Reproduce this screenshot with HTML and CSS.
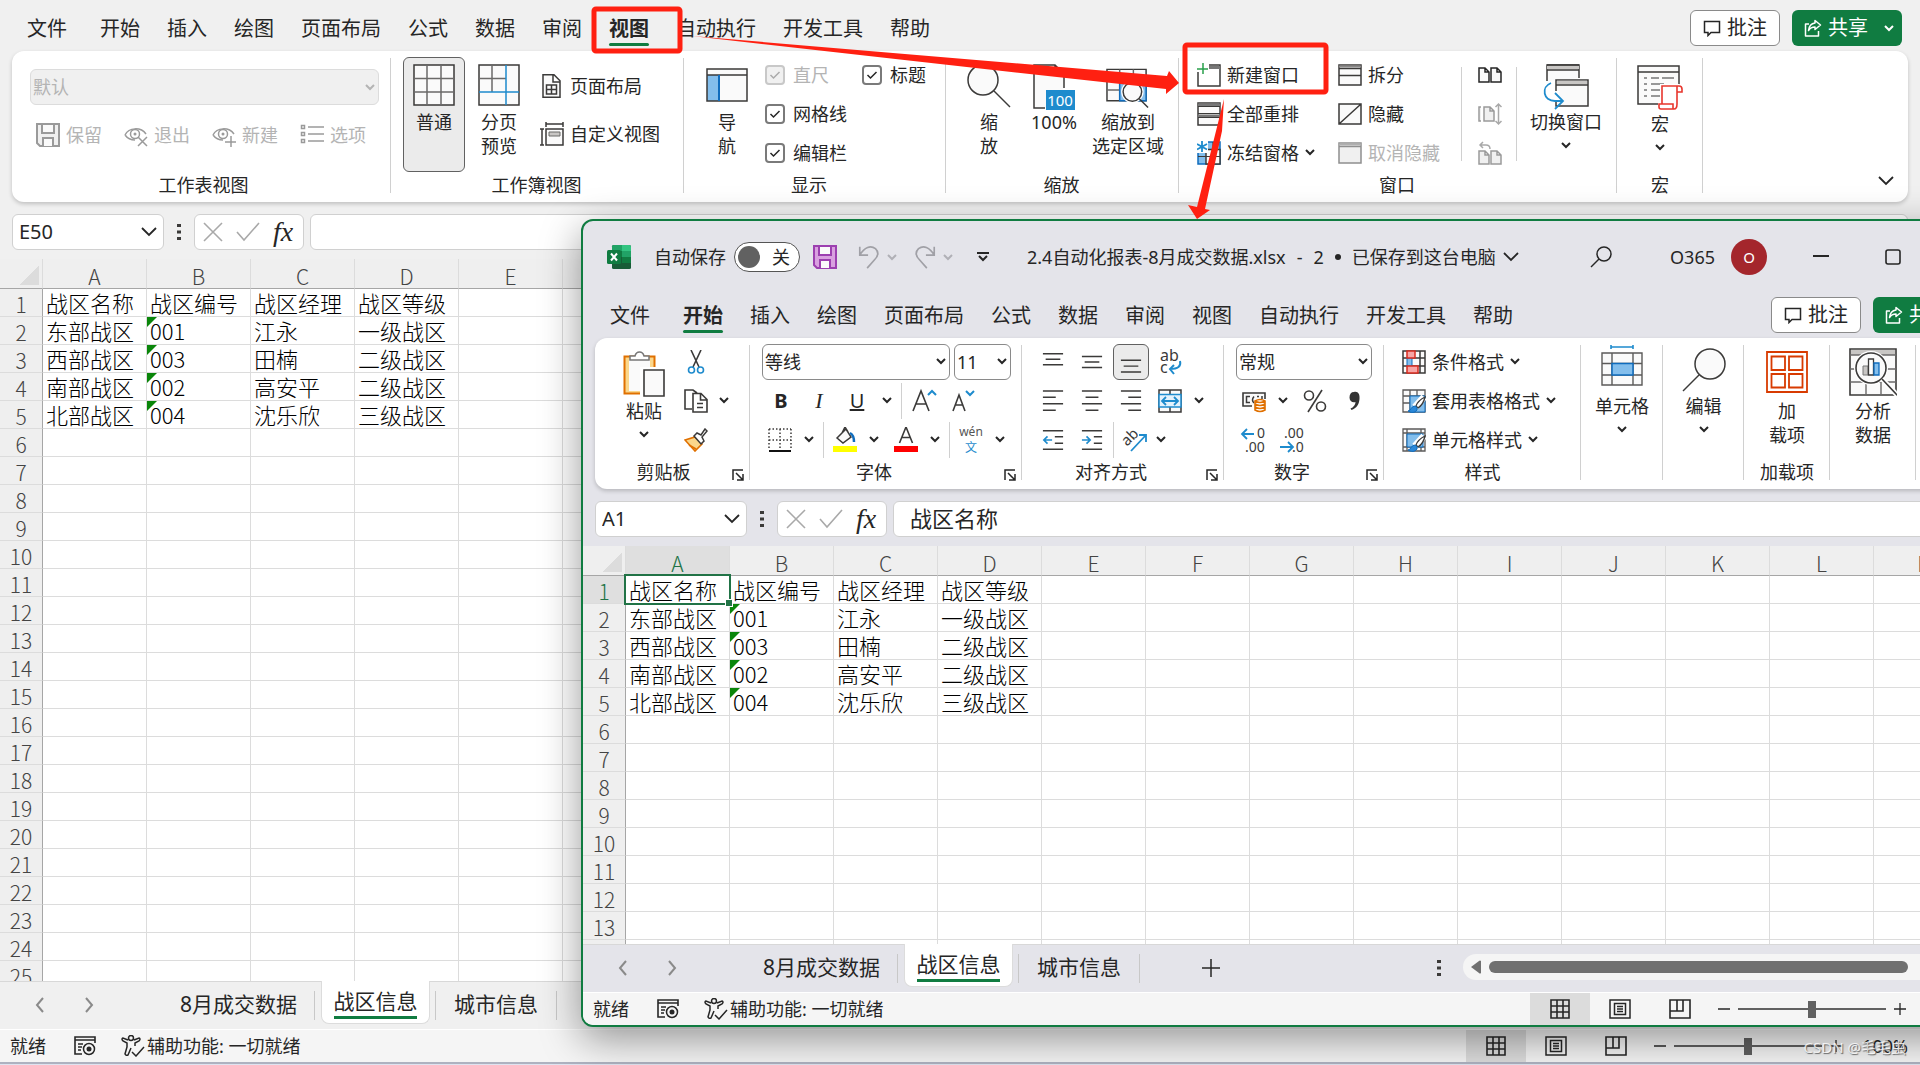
FILE: index.html
```html
<!DOCTYPE html>
<html lang="zh-CN">
<head>
<meta charset="utf-8">
<title>2.4自动化报表-8月成交数据.xlsx</title>
<link rel="stylesheet" href="styles.css">
<script src="sheet.js" defer></script>
</head>
<body>
<svg class="defs" aria-hidden="true">
  <symbol id="chev" viewBox="0 0 10 7"><path d="M1 1l4 4 4-4" fill="none" stroke="currentColor" stroke-width="2"/></symbol>
  <symbol id="chev-lg" viewBox="0 0 16 10"><path d="M1 1l7 7 7-7" fill="none" stroke="currentColor" stroke-width="1.800"/></symbol>
  <symbol id="left" viewBox="0 0 10 16"><path d="M8 1L2 8l6 7" fill="none" stroke="currentColor" stroke-width="2"/></symbol>
  <symbol id="right" viewBox="0 0 10 16"><path d="M2 1l6 7-6 7" fill="none" stroke="currentColor" stroke-width="2"/></symbol>
  <symbol id="comment" viewBox="0 0 18 18"><path d="M1.500 2.500h15v11H8l-3 3v-3H1.500z" fill="none" stroke="#262626" stroke-width="1.500"/></symbol>
  <symbol id="share" viewBox="0 0 18 18"><path d="M5 5H1.500v12h13v-5M11 1.500l5.500 4.500L11 10.500V8C8 8 6 9 4.500 11.500 5 7 7.500 4.500 11 4z" fill="none" stroke="#fff" stroke-width="1.500" stroke-linejoin="round"/></symbol>
  <symbol id="save" viewBox="0 0 24 24"><path d="M1 1h22v22H4l-3-3z" fill="var(--f,#f0f0f0)" stroke="currentColor" stroke-width="2"/><path d="M6 1h12v9H6zM7 23v-8h10v8" fill="#fafafa" stroke="currentColor" stroke-width="2"/></symbol>
  <symbol id="eye" viewBox="0 0 24 24"><path d="M1 12C5 4 17 4 22 11M1 12c3 4 6 5 10 5" fill="none" stroke="currentColor" stroke-width="1.500"/><circle cx="11" cy="11" r="4.500" fill="none" stroke="currentColor" stroke-width="1.500"/><circle cx="11" cy="11" r="1.500" fill="currentColor"/></symbol>
  <symbol id="list" viewBox="0 0 24 24"><path d="M1.500 2.500h3v3h-3zM1.500 9.500h3v3h-3zM1.500 16.500h3v3h-3zM8 4h16M8 11h16M8 18h16" fill="none" stroke="currentColor" stroke-width="1.500"/></symbol>
  <symbol id="grid-lg" viewBox="0 0 42 42"><path d="M1 1h40v40H1z" fill="#fafafa" stroke="#3b3a39" stroke-width="1.500"/><path d="M14 1v40M28 1v40M1 14.500h40M1 28h40" stroke="#6b6a69" stroke-width="1.500"/></symbol>
  <symbol id="pagebreak" viewBox="0 0 42 42"><path d="M1 1h40v40H1z" fill="#fafafa" stroke="#3b3a39" stroke-width="1.500"/><path d="M14 1v27M1 14.500h27" stroke="#6b6a69" stroke-width="1.500"/><path d="M28 1v40M1 28h40" stroke="#1e8bcd" stroke-width="1.500"/></symbol>
  <symbol id="page" viewBox="0 0 24 24"><path d="M3 .8h11l6 6v16.400H3zM13 1v7h7" fill="#fafafa" stroke="#3b3a39" stroke-width="1.500"/><path d="M6.500 11h10v9h-10zM11.500 11v9M6.500 15.500h10" fill="none" stroke="#3b3a39" stroke-width="1.500"/></symbol>
  <symbol id="custom" viewBox="0 0 24 24"><path d="M6 7h17v16H6z" fill="#fafafa" stroke="#3b3a39" stroke-width="1.500"/><path d="M9 10h11v4H9z" fill="#c8c6c4" stroke="#6b6a69"/><path d="M6 2h17M6 0v5M23 0v5M2 7v16M0 7h4M0 23h4" stroke="#3b3a39" stroke-width="1.500"/></symbol>
  <symbol id="navpane" viewBox="0 0 42 42"><path d="M1 5h40v32H1z" fill="#fafafa"/><path d="M1 11h12v26H1z" fill="#83beec"/><path d="M1 5h40v32H1zM1 11h40" fill="none" stroke="#3b3a39" stroke-width="1.500"/><path d="M13 11v26" stroke="#0f6cbd" stroke-width="2"/></symbol>
  <symbol id="zoom" viewBox="0 0 44 44"><circle cx="16" cy="16" r="15" fill="#fafafa" stroke="#3b3a39" stroke-width="1.500"/><path d="M27 27l16 16" stroke="#3b3a39" stroke-width="1.500"/></symbol>
  <symbol id="find" viewBox="0 0 44 44"><circle cx="28" cy="16" r="15" fill="#fafafa" stroke="#3b3a39" stroke-width="1.500"/><path d="M17 27L1 43" stroke="#3b3a39" stroke-width="1.500"/></symbol>
  <symbol id="zoomsel" viewBox="0 0 45 44"><path d="M1 5h40v32H1z" fill="#fafafa" stroke="#3b3a39" stroke-width="1.500"/><path d="M14 5v32M28 5v32M1 15h40M1 26h13" stroke="#6b6a69" stroke-width="1.500"/><path d="M14 15h27v22H14z" fill="#83beec" stroke="#0f6cbd" stroke-width="1.500"/><circle cx="27" cy="28" r="9.500" fill="#fafafa" stroke="#fff" stroke-width="4"/><circle cx="27" cy="28" r="9.500" fill="#fafafa" stroke="#3b3a39" stroke-width="1.500"/><path d="M34 35l9 9" stroke="#3b3a39" stroke-width="1.500"/></symbol>
  <symbol id="newwin" viewBox="0 0 24 24"><path d="M1 9v14h22V2H12" fill="none" stroke="#3b3a39" stroke-width="1.500"/><path d="M12 4.500h11" stroke="#777" stroke-width="3"/><path d="M6 0v11M0 6h11" stroke="#28a04b" stroke-width="1.500"/></symbol>
  <symbol id="arrange" viewBox="0 0 24 24"><path d="M1 1h22v22H1z" fill="#fafafa" stroke="#3b3a39" stroke-width="1.500"/><path d="M1 3h22M1 14h22" stroke="#777" stroke-width="3"/><path d="M1 4.500h22M1 11.500h22M1 15.500h22" stroke="#3b3a39" stroke-width="1.200"/></symbol>
  <symbol id="freeze" viewBox="0 0 24 24"><path d="M1 1h22v22H1z" fill="#83beec" stroke="#0f6cbd" stroke-width="1.500"/><path d="M9 8.500h14V23H9z" fill="#fafafa" stroke="#3b3a39" stroke-width="1.500"/><path d="M16 1v22M1 15.500h22" stroke="#3b3a39" stroke-width="1.200"/><path d="M0 0h11v12H0z" fill="#fff"/><path d="M5 0v11M0 3l10 5.500M10 3L0 8.500" stroke="#1e8bcd" stroke-width="1.800"/></symbol>
  <symbol id="split" viewBox="0 0 24 24"><path d="M1 2h22v20H1zM1 5.500h22M1 12.500h22" fill="#fafafa" stroke="#3b3a39" stroke-width="1.500"/><path d="M1 3.500h22" stroke="#8a8988" stroke-width="2"/></symbol>
  <symbol id="hide" viewBox="0 0 24 24"><path d="M1 2h22v20H1zM1 22L23 2" fill="#fafafa" stroke="#3b3a39" stroke-width="1.500"/></symbol>
  <symbol id="unhide" viewBox="0 0 24 24"><path d="M1 2h22v20H1zM1 5.500h22" fill="#f0f0f0" stroke="#8f8f8f" stroke-width="1.500"/><path d="M1 3.500h22" stroke="#b0b0b0" stroke-width="2"/></symbol>
  <symbol id="twopages" viewBox="0 0 24 24"><path d="M1 5h6l4 4v10H1zM7 5v4h4M13 5h6l4 4v10H13zM19 5v4h4" fill="#fafafa" stroke="currentColor" stroke-width="1.500"/></symbol>
  <symbol id="syncscroll" viewBox="0 0 24 24"><path d="M3 5H1v14h2M6 5h6l4 4v10H6zM12 5v4h4" fill="#f0f0f0" stroke="currentColor" stroke-width="1.500"/><path d="M20.500 2v20M17.500 5l3-3 3 3M17.500 19l3 3 3-3" fill="none" stroke="#a9a9a9" stroke-width="1.500"/></symbol>
  <symbol id="resetpos" viewBox="0 0 24 24"><path d="M1 10h6l4 4v9H1zM7 10v4h4M13 10h6l4 4v9H13zM19 10v4h4" fill="#f0f0f0" stroke="currentColor" stroke-width="1.500"/><path d="M5 1L2 4l3 3M2 4h6q4 0 4 4" fill="none" stroke="#a9a9a9" stroke-width="1.500"/></symbol>
  <symbol id="switchwin" viewBox="0 0 46 46"><path d="M4 17V1h32v13" fill="#fafafa" stroke="#3b3a39" stroke-width="1.500"/><path d="M4 3.500h32" stroke="#c8c6c4" stroke-width="3.500"/><path d="M4 1h32M4 6h32" stroke="#3b3a39" stroke-width="1.500"/><path d="M13 16h32v26H13z" fill="#fafafa" stroke="#3b3a39" stroke-width="1.500"/><path d="M14 18.500h30" stroke="#c8c6c4" stroke-width="3.500"/><path d="M13 21h32" stroke="#3b3a39" stroke-width="1.500"/><path d="M10 27h6v10h-6z" fill="#fff"/><path d="M8 19C-2 23 0 37 12 37h8M12 29l8 8-8 8" fill="none" stroke="#1e8bcd" stroke-width="1.800"/></symbol>
  <symbol id="macro" viewBox="0 0 46 46"><path d="M1 2h41v38H1zM1 8h41" fill="#fafafa" stroke="#3b3a39" stroke-width="1.500"/><path d="M7 14h3M14 14h8M25 14h12M7 20h3M14 20h13M7 26h3M14 26h9M7 32h3M14 32h9" stroke="#777" stroke-width="1.500"/><path d="M25 22h17q3 0 3 6h-4v17H23v-5h2z" fill="#fff" stroke="#fff" stroke-width="4"/><path d="M25 40V22h17q3 0 3 3v3h-5V22M40 28v12q0 5-3 5H24q-2 0-2-2v-3h14v5" fill="#fff" stroke="#e8362d" stroke-width="1.600"/></symbol>
  <symbol id="excel" viewBox="0 0 24 24"><rect x="5" width="19" height="24" rx="1.500" fill="#185c37"/><path d="M5 1.500Q5 0 6.500 0H15v6H5z" fill="#21a366"/><path d="M15 0h7.500Q24 0 24 1.500V6h-9z" fill="#33c481"/><path d="M5 6h10v6H5z" fill="#107c41"/><path d="M15 6h9v6h-9z" fill="#21a366"/><path d="M15 12h9v6h-9z" fill="#107c41"/><rect y="5" width="14" height="14" rx="1.500" fill="#107c41"/><path d="M4 8.500l6 7M10 8.500l-6 7" stroke="#fff" stroke-width="2"/></symbol>
  <symbol id="undo" viewBox="0 0 24 26"><path d="M2 2v9h9M2 11C7 2 14 0 19 4c4 4 3 8-1 12l-8 9" fill="none" stroke="#a0a0a6" stroke-width="1.800"/></symbol>
  <symbol id="qat" viewBox="0 0 12 10"><path d="M0 1h12M2 4l4 4 4-4" fill="none" stroke="#262626" stroke-width="2"/></symbol>
  <symbol id="paste" viewBox="0 0 42 46"><path d="M1.500 5.500h30v37h-30z" fill="#fbd78b" stroke="#e07000" stroke-width="2"/><path d="M6 9h21v31H6z" fill="#fafafa"/><path d="M7 9V5h5q1-4 4.500-4T21 5h5v4z" fill="#fff" stroke="#777" stroke-width="1.500"/><path d="M19 18h22v27H19z" fill="#fff" stroke="#fff" stroke-width="4"/><path d="M21 19h20v26H21z" fill="#fafafa" stroke="#3b3a39" stroke-width="1.600"/></symbol>
  <symbol id="cut" viewBox="0 0 24 24"><path d="M7 0l8 17M17 0L9 17" stroke="#3b3a39" stroke-width="1.600"/><circle cx="7.500" cy="20" r="3" fill="none" stroke="#1e8bcd" stroke-width="1.600"/><circle cx="16.500" cy="20" r="3" fill="none" stroke="#1e8bcd" stroke-width="1.600"/></symbol>
  <symbol id="copy" viewBox="0 0 24 24"><path d="M8 20H1V1h8l4 3M9 4.500h8l6 6V23H9zM16.500 5v6H23M13 14.500h6M13 18.500h6" fill="none" stroke="#3b3a39" stroke-width="1.600"/></symbol>
  <symbol id="painter" viewBox="0 0 24 24"><path d="M1 12l10-3 7 7-7 7z" fill="#fbd78b" stroke="#e07000" stroke-width="1.600"/><path d="M5 17l7 4" stroke="#e07000" stroke-width="1.500"/><path d="M10 8l3-3 4 2 4-6 2 2-5 6 2 4-3 3z" fill="#fff" stroke="#3b3a39" stroke-width="1.500"/></symbol>
  <symbol id="growA" viewBox="0 0 26 24"><path d="M1 22L9 2l8 20M4 15h10" fill="none" stroke="#3b3a39" stroke-width="1.600"/><path d="M16 6l4-4 4 4" fill="none" stroke="#1e8bcd" stroke-width="2"/></symbol>
  <symbol id="shrinkA" viewBox="0 0 26 24"><path d="M1 22L7 6l6 16M3 16h8" fill="none" stroke="#3b3a39" stroke-width="1.600"/><path d="M14 2l4 4 4-4" fill="none" stroke="#1e8bcd" stroke-width="2"/></symbol>
  <symbol id="border" viewBox="0 0 24 24"><path d="M1 1h22M1 12h22M1 1v20M12 1v20M23 1v20" fill="none" stroke="#3b3a39" stroke-width="1.500" stroke-dasharray="1.500 2"/><path d="M1 23h22" stroke="#111" stroke-width="2"/></symbol>
  <symbol id="fill" viewBox="0 0 24 26"><path d="M4 11l9-9 5 8-8 6zM9 6l3-6 3 5" fill="#fafafa" stroke="#3b3a39" stroke-width="1.500"/><path d="M17 6q4 2 4 9" fill="none" stroke="#0f6cbd" stroke-width="2.500"/><path d="M0 19h24v6H0z" fill="#ff0"/></symbol>
  <symbol id="fontcolor" viewBox="0 0 24 26"><path d="M5.500 16L12 0l6.500 16M8 10.500h8" fill="none" stroke="#3b3a39" stroke-width="1.600"/><path d="M0 19h24v6H0z" fill="red"/></symbol>
  <symbol id="al-t" viewBox="0 0 24 24"><path d="M1 3h22M4 9h16M1 15h22" stroke="#3b3a39" stroke-width="1.600"/></symbol>
  <symbol id="al-m" viewBox="0 0 24 24"><path d="M1 6h22M4 12h16M1 18h22" stroke="#3b3a39" stroke-width="1.600"/></symbol>
  <symbol id="al-b" viewBox="0 0 24 24"><path d="M1 10h22M4 16.500h16M1 23h22" stroke="#3b3a39" stroke-width="1.600"/></symbol>
  <symbol id="al-l" viewBox="0 0 24 24"><path d="M1 1h22M1 8h14M1 15h22M1 22h14" stroke="#3b3a39" stroke-width="1.600"/></symbol>
  <symbol id="al-c" viewBox="0 0 24 24"><path d="M1 1h22M5 8h14M1 15h22M5 22h14" stroke="#3b3a39" stroke-width="1.600"/></symbol>
  <symbol id="al-r" viewBox="0 0 24 24"><path d="M1 1h22M9 8h14M1 15h22M9 22h14" stroke="#3b3a39" stroke-width="1.600"/></symbol>
  <symbol id="outdent" viewBox="0 0 24 24"><path d="M1 2h22M14 8.500h9M14 15.500h9M1 22h22" stroke="#3b3a39" stroke-width="1.600"/><path d="M11 12H2M6 8l-4 4 4 4" fill="none" stroke="#1e8bcd" stroke-width="1.800"/></symbol>
  <symbol id="indent" viewBox="0 0 24 24"><path d="M1 2h22M14 8.500h9M14 15.500h9M1 22h22" stroke="#3b3a39" stroke-width="1.600"/><path d="M1 12h9M6 8l4 4-4 4" fill="none" stroke="#1e8bcd" stroke-width="1.800"/></symbol>
  <symbol id="merge" viewBox="0 0 24 24"><path d="M1 1h22v22H1zM12 1v5M12 18v5" fill="#fafafa" stroke="#3b3a39" stroke-width="1.500"/><path d="M1 5.500h22v12.500H1z" fill="#e4f2fc" stroke="#1e8bcd" stroke-width="1.500"/><path d="M4 12h16M8 8l-4 4 4 4M16 8l4 4-4 4" fill="none" stroke="#1e8bcd" stroke-width="1.800"/></symbol>
  <symbol id="currency" viewBox="0 0 24 24"><path d="M10 17H1V4h22v6" fill="#fafafa" stroke="#3b3a39" stroke-width="1.600"/><path d="M8 7.500H4.500v6H8M12 14q-3-3 0-6.500M15 7.500h2M20 7v3" fill="none" stroke="#3b3a39" stroke-width="1.500"/><path d="M13 12v9q5 3 10 0v-9q-5-3-10 0zM13 12q5 3 10 0M13 15q5 3 10 0M13 18q5 3 10 0" fill="#fff" stroke="#e07000" stroke-width="1.600"/></symbol>
  <symbol id="percent" viewBox="0 0 24 24"><circle cx="6" cy="6.500" r="4.500" fill="none" stroke="#3b3a39" stroke-width="1.600"/><circle cx="18" cy="17.500" r="4.500" fill="none" stroke="#3b3a39" stroke-width="1.600"/><path d="M19 1L5 23" stroke="#3b3a39" stroke-width="1.600"/></symbol>
  <symbol id="comma" viewBox="0 0 24 24"><path d="M12 3c4-1 6 2 5.500 7-.5 6-3 9-8 11l-1-1.500c3-1 5-4 5-6.500-3 1-6-1-6-4.500S9 3 12 3z" fill="#333"/></symbol>
  <symbol id="cond" viewBox="0 0 24 24"><path d="M1 1h22v22H1zM1 8h22M1 16h22M18 1v22" fill="#fafafa" stroke="#3b3a39" stroke-width="1.500"/><path d="M5 8h5v8H5z" fill="#83beec" stroke="#0f6cbd"/><path d="M5 1h8v7H5zM5 16h11v7H5z" fill="#f7a5a5" stroke="#d92c20" stroke-width="1.500"/></symbol>
  <symbol id="tablestyle" viewBox="0 0 24 24"><path d="M1 1h22v22H1zM1 7h22M1 14h22M8 1v22M15 1v22" fill="#fafafa" stroke="#5b5a59" stroke-width="1.300"/><path d="M8 7h15v16H8z" fill="#83beec" stroke="#0f6cbd"/><path d="M22 8l-9 10" stroke="#fff" stroke-width="7"/><path d="M23 8c-4 2-8 6-9 9l2 2c3-2 6-6 7-11z" fill="#fff" stroke="#3b3a39" stroke-width="1.300"/><path d="M6 22c3 0 3-5 7-5q3 1 2 4c-2 3-6 3-9 1z" fill="#2b88d8" stroke="#0f6cbd"/></symbol>
  <symbol id="cellstyle" viewBox="0 0 24 24"><path d="M1 1h22v22H1zM1 5h22M5 1v22M1 19h22M19 1v22" fill="#fafafa" stroke="#5b5a59" stroke-width="1.300"/><path d="M5 6h16v13H5z" fill="#83beec" stroke="#0f6cbd"/><path d="M22 8l-9 10" stroke="#fff" stroke-width="7"/><path d="M23 8c-4 2-8 6-9 9l2 2c3-2 6-6 7-11z" fill="#fff" stroke="#3b3a39" stroke-width="1.300"/><path d="M6 22c3 0 3-5 7-5q3 1 2 4c-2 3-6 3-9 1z" fill="#2b88d8" stroke="#0f6cbd"/></symbol>
  <symbol id="cells" viewBox="0 0 42 42"><path d="M10 2h22M10 0v4M32 0v4" stroke="#1e8bcd" stroke-width="1.600"/><path d="M1 8h40v32H1zM1 18.500h40M1 30h40M11 8v32M32 8v32" fill="#fafafa" stroke="#5b5a59" stroke-width="1.400"/><path d="M11 18.500h21V30H11z" fill="#83beec" stroke="#0f6cbd" stroke-width="1.500"/></symbol>
  <symbol id="addins" viewBox="0 0 42 42"><path d="M1 1h40v40H1zM5.500 5.500H19V19H5.500zM23 5.500h13.500V19H23zM5.500 23H19v13.500H5.500zM23 23h13.500v13.500H23z" fill="#fff" stroke="#d83b01" stroke-width="1.800"/></symbol>
  <symbol id="analyze" viewBox="0 0 48 48"><path d="M1 1h46v46H1z" fill="#fafafa" stroke="#3b3a39" stroke-width="1.600"/><path d="M2 2h44v5H2z" fill="#c8c6c4"/><path d="M1 7h46M1 21h46M1 34h46M17 34v13M32 7v40" stroke="#6b6a69" stroke-width="1.400"/><circle cx="22" cy="20" r="15" fill="#fafafa" stroke="#fff" stroke-width="4"/><circle cx="22" cy="20" r="15" fill="#fafafa" stroke="#3b3a39" stroke-width="1.600"/><path d="M14 18h5v9h-5z" fill="#c8c6c4" stroke="#777"/><path d="M19.500 11h5v16h-5z" fill="#fff" stroke="#3b3a39" stroke-width="1.300"/><path d="M25 15h5v12h-5z" fill="#83beec" stroke="#0f6cbd" stroke-width="1.300"/><path d="M33 31l15 16" stroke="#fff" stroke-width="5"/><path d="M33 31l15 16" stroke="#3b3a39" stroke-width="1.600"/></symbol>
  <symbol id="launch" viewBox="0 0 12 12"><path d="M1 11V1h10M4 4l7 7M11 5v6H5" fill="none" stroke="#262626" stroke-width="1.500"/></symbol>
  <symbol id="x" viewBox="0 0 20 20"><path d="M1 1l18 18M19 1L1 19" stroke="#a9a9a9" stroke-width="1.600"/></symbol>
  <symbol id="tick" viewBox="0 0 24 20"><path d="M1 10l7 8L23 1" fill="none" stroke="#a9a9a9" stroke-width="1.600"/></symbol>
  <symbol id="dots" viewBox="0 0 4 16"><path d="M0 0h4v3H0zM0 6.500h4v3H0zM0 13h4v3H0z" fill="#3b3a39"/></symbol>
  <symbol id="record" viewBox="0 0 22 20"><path d="M8 18H1V1h20v6M1 4h20M4 8h5M4 11h4M4 14h3" fill="none" stroke="#262626" stroke-width="1.600"/><circle cx="15" cy="13" r="5.500" fill="none" stroke="#262626" stroke-width="1.500"/><circle cx="15" cy="13" r="2.500" fill="#262626"/></symbol>
  <symbol id="access" viewBox="0 0 24 22"><circle cx="10" cy="3" r="2.500" fill="none" stroke="#262626" stroke-width="1.500"/><path d="M7 5L2 3Q0 4 2 6l4 2v4l-2 7q1 2 3 1l3-7M13 5l5-2q2 1 0 3l-4 2v3M11 17l4 4 8-9" fill="none" stroke="#262626" stroke-width="1.500"/></symbol>
  <symbol id="v-normal" viewBox="0 0 20 20"><path d="M1 1h18v18H1zM7 1v18M13 1v18M1 7h18M1 13h18" fill="none" stroke="#262626" stroke-width="1.600"/></symbol>
  <symbol id="v-layout" viewBox="0 0 22 20"><path d="M1 1h20v18H1zM5.500 4.500h11v11h-11zM8 7.500h6M8 10h6M8 12.500h6" fill="none" stroke="#262626" stroke-width="1.500"/></symbol>
  <symbol id="v-break" viewBox="0 0 22 20"><path d="M1 1h20v18H1zM1 12h13V1M8 1v11" fill="none" stroke="#262626" stroke-width="1.600"/></symbol>
  <symbol id="minus" viewBox="0 0 12 12"><path d="M0 6h12" stroke="#262626" stroke-width="1.500"/></symbol>
  <symbol id="plus" viewBox="0 0 12 12"><path d="M0 6h12M6 0v12" stroke="#262626" stroke-width="1.300"/></symbol>
</svg>

<main class="desktop">
  <section class="window back">
    <header class="tabs">
      <nav>
        <button>文件</button><button>开始</button><button>插入</button><button>绘图</button><button>页面布局</button><button>公式</button><button>数据</button><button>审阅</button><button class="on">视图</button><button>自动执行</button><button>开发工具</button><button>帮助</button>
      </nav>
      <button class="comments"><svg class="s18"><use href="#comment"/></svg>批注</button>
      <button class="share"><svg class="s18"><use href="#share"/></svg>共享<svg class="chev"><use href="#chev"/></svg></button>
    </header>

    <div class="ribbon">
      <div class="group g-sheetview">
        <div class="body rows">
          <select class="combo view" disabled aria-label="工作表视图"><option>默认</option></select>
          <div class="row views">
            <button class="tool" disabled><svg class="s24"><use href="#save"/></svg>保留</button>
            <button class="tool" disabled><svg class="s24"><use href="#eye"/><path d="M14 14l9 9M23 14l-9 9" stroke="currentColor" stroke-width="1.500"/></svg>退出</button>
            <button class="tool" disabled><svg class="s24"><use href="#eye"/><path d="M19 13v11M13 19h11" stroke="currentColor" stroke-width="1.500"/></svg>新建</button>
            <button class="tool" disabled><svg class="s24"><use href="#list"/></svg>选项</button>
          </div>
        </div>
        <div class="caption"><span>工作表视图</span></div>
      </div>
      <div class="group g-bookview">
        <div class="body">
          <button class="tall pressed"><svg class="s42"><use href="#grid-lg"/></svg><span>普通</span></button>
          <button class="tall"><svg class="s42"><use href="#pagebreak"/></svg><span>分页<br>预览</span></button>
          <div class="stack two">
            <button class="tool"><svg class="s24"><use href="#page"/></svg>页面布局</button>
            <button class="tool"><svg class="s24"><use href="#custom"/></svg>自定义视图</button>
          </div>
        </div>
        <div class="caption"><span>工作簿视图</span></div>
      </div>
      <div class="group g-show">
        <div class="body">
          <button class="tall"><svg class="s42"><use href="#navpane"/></svg><span>导<br>航</span></button>
          <div class="checks">
            <label class="off"><input type="checkbox" checked disabled>直尺</label>
            <label><input type="checkbox" checked>标题</label>
            <label><input type="checkbox" checked>网格线</label>
            <label class="own-row"><input type="checkbox" checked>编辑栏</label>
          </div>
        </div>
        <div class="caption"><span>显示</span></div>
      </div>
      <div class="group g-zoom">
        <div class="body">
          <button class="tall"><svg class="s44"><use href="#zoom"/></svg><span>缩<br>放</span></button>
          <button class="tall"><svg class="s42x46" viewBox="0 0 42 46"><path d="M12 44H1V1h21l9 9v14M22 1v9h9" fill="#fafafa" stroke="#3b3a39" stroke-width="1.500"/><path d="M13 26h29v20H13z" fill="#1e8bcd"/><text x="27" y="42" font-size="15" text-anchor="middle" fill="#fff">100</text></svg><span>100%</span></button>
          <button class="tall wide"><svg class="s44"><use href="#zoomsel"/></svg><span>缩放到<br>选定区域</span></button>
        </div>
        <div class="caption"><span>缩放</span></div>
      </div>
      <div class="group g-window">
        <div class="body">
          <div class="stack first">
            <button class="tool"><svg class="s24"><use href="#newwin"/></svg>新建窗口</button>
            <button class="tool"><svg class="s24"><use href="#arrange"/></svg>全部重排</button>
            <button class="tool"><svg class="s24"><use href="#freeze"/></svg>冻结窗格<svg class="chev"><use href="#chev"/></svg></button>
          </div>
          <div class="stack second">
            <button class="tool"><svg class="s24"><use href="#split"/></svg>拆分</button>
            <button class="tool"><svg class="s24"><use href="#hide"/></svg>隐藏</button>
            <button class="tool" disabled><svg class="s24"><use href="#unhide"/></svg>取消隐藏</button>
          </div>
          <div class="stack icons">
            <button class="tool" aria-label="并排查看"><svg class="s24"><use href="#twopages"/></svg></button>
            <button class="tool" disabled aria-label="同步滚动"><svg class="s24"><use href="#syncscroll"/></svg></button>
            <button class="tool" disabled aria-label="重设窗口位置"><svg class="s24"><use href="#resetpos"/></svg></button>
          </div>
          <button class="tall wide"><svg class="s46"><use href="#switchwin"/></svg><span>切换窗口</span><svg class="chev"><use href="#chev"/></svg></button>
        </div>
        <div class="caption"><span>窗口</span></div>
      </div>
      <div class="group g-macro">
        <div class="body">
          <button class="tall"><svg class="s46"><use href="#macro"/></svg><span>宏</span><svg class="chev"><use href="#chev"/></svg></button>
        </div>
        <div class="caption"><span>宏</span></div>
      </div>
      <button class="collapse" aria-label="折叠功能区"><svg class="chev-lg"><use href="#chev-lg"/></svg></button>
    </div>

    <div class="formula">
      <div class="namebox"><input value="E50" aria-label="名称框"><svg class="chev-md"><use href="#chev-lg"/></svg></div>
      <svg class="dots"><use href="#dots"/></svg>
      <div class="fx"><svg class="s20"><use href="#x"/></svg><svg class="tick"><use href="#tick"/></svg><i>fx</i></div>
      <input class="content" value="" aria-label="编辑栏">
    </div>

    <div class="sheet"><table data-cols="18"></table></div>

    <footer>
      <div class="sheettabs">
        <div class="arrows"><button aria-label="上一张"><svg><use href="#left"/></svg></button><button aria-label="下一张"><svg><use href="#right"/></svg></button></div>
        <button class="stab">8月成交数据</button>
        <button class="stab on">战区信息</button>
        <button class="stab last">城市信息</button>
      </div>
      <div class="status">
        <span>就绪</span><svg class="rec"><use href="#record"/></svg><svg class="acc"><use href="#access"/></svg><span>辅助功能: 一切就绪</span>
        <div class="views-switch">
          <button class="on" aria-label="普通视图"><svg class="s20"><use href="#v-normal"/></svg></button>
          <button aria-label="页面布局视图"><svg class="s22"><use href="#v-layout"/></svg></button>
          <button aria-label="分页预览视图"><svg class="s22"><use href="#v-break"/></svg></button>
        </div>
        <svg class="s12"><use href="#minus"/></svg><input type="range" min="0" max="100" value="50" aria-label="显示比例"><svg class="s12"><use href="#plus"/></svg>
        <span class="pct">100%</span>
      </div>
      <div class="edge"></div>
    </footer>
  </section>

  <section class="window front">
    <div class="titlebar">
      <svg class="s24"><use href="#excel"/></svg>
      <span class="autosave">自动保存</span>
      <button class="toggle" role="switch" aria-checked="false"><i></i>关</button>
      <svg class="s24 purple"><use href="#save"/></svg>
      <button class="hist" aria-label="撤消"><svg class="s24"><use href="#undo"/></svg><svg class="chev pale"><use href="#chev"/></svg></button>
      <button class="hist redo" aria-label="恢复"><svg class="s24"><use href="#undo"/></svg><svg class="chev pale"><use href="#chev"/></svg></button>
      <svg class="qat"><use href="#qat"/></svg>
      <div class="doc"><span>2.4自动化报表-8月成交数据.xlsx</span><span>-</span><span>2</span><i></i><span>已保存到这台电脑</span></div>
      <svg class="chev-md"><use href="#chev-lg"/></svg>
      <div class="account">
        <button class="search" aria-label="搜索"><svg class="s22"><circle cx="14" cy="8" r="7" fill="none" stroke="#262626" stroke-width="1.500"/><path d="M9 13L1 21" stroke="#262626" stroke-width="1.500"/></svg></button>
        <span>O365</span><b>O</b>
        <button class="min" aria-label="最小化"><svg class="s16"><path d="M0 7h16" stroke="#262626" stroke-width="2"/></svg></button>
        <button aria-label="最大化"><svg class="s16"><rect x="1" y="1" width="14" height="14" rx="2" fill="none" stroke="#262626" stroke-width="1.600"/></svg></button>
      </div>
    </div>
    <header class="tabs">
      <nav>
        <button>文件</button><button class="on">开始</button><button>插入</button><button>绘图</button><button>页面布局</button><button>公式</button><button>数据</button><button>审阅</button><button>视图</button><button>自动执行</button><button>开发工具</button><button>帮助</button>
      </nav>
      <button class="comments"><svg class="s18"><use href="#comment"/></svg>批注</button>
      <button class="share"><svg class="s18"><use href="#share"/></svg>共享<svg class="chev"><use href="#chev"/></svg></button>
    </header>

    <div class="ribbon">
      <div class="group g-clip">
        <div class="body">
          <button class="tall"><svg class="s42x46"><use href="#paste"/></svg><span>粘贴</span><svg class="chev"><use href="#chev"/></svg></button>
          <div class="stack">
            <button class="tool" aria-label="剪切"><svg class="s24"><use href="#cut"/></svg></button>
            <button class="tool" aria-label="复制"><svg class="s24"><use href="#copy"/></svg><svg class="chev far"><use href="#chev"/></svg></button>
            <button class="tool" aria-label="格式刷"><svg class="s24"><use href="#painter"/></svg></button>
          </div>
        </div>
        <div class="caption"><span>剪贴板</span><svg class="s12"><use href="#launch"/></svg></div>
      </div>
      <div class="group g-font">
        <div class="body rows">
          <div class="row gap4"><select class="combo face" aria-label="字体"><option>等线</option></select><select class="combo size" aria-label="字号"><option>11</option></select></div>
          <div class="row">
            <button class="ib w38"><b>B</b></button><button class="ib w38"><em>I</em></button><button class="ib w38"><u>U</u></button><button class="dd" aria-label="下划线"><svg class="chev"><use href="#chev"/></svg></button><i class="sep"></i>
            <button class="ib w40" aria-label="增大字号"><svg class="s26"><use href="#growA"/></svg></button><button class="ib w40" aria-label="减小字号"><svg class="s26"><use href="#shrinkA"/></svg></button>
          </div>
          <div class="row">
            <button class="ib" aria-label="边框"><svg class="s24"><use href="#border"/></svg></button><button class="dd" aria-label="边框选项"><svg class="chev"><use href="#chev"/></svg></button><i class="sep"></i>
            <button class="ib" aria-label="填充颜色"><svg class="s26"><use href="#fill"/></svg></button><button class="dd" aria-label="填充选项"><svg class="chev"><use href="#chev"/></svg></button>
            <button class="ib" aria-label="字体颜色"><svg class="s26"><use href="#fontcolor"/></svg></button><button class="dd" aria-label="颜色选项"><svg class="chev"><use href="#chev"/></svg></button><i class="sep"></i>
            <button class="ib" aria-label="拼音"><svg class="s26" viewBox="0 0 26 26"><text x="13" y="9" font-size="12" text-anchor="middle" fill="#555">wén</text><text x="13" y="25" font-size="12" text-anchor="middle" fill="#1e8bcd">文</text></svg></button><button class="dd" aria-label="拼音选项"><svg class="chev"><use href="#chev"/></svg></button>
          </div>
        </div>
        <div class="caption"><span>字体</span><svg class="s12"><use href="#launch"/></svg></div>
      </div>
      <div class="group g-align">
        <div class="body rows">
          <div class="row gap3"><button class="ib" aria-label="顶端对齐"><svg class="s22"><use href="#al-t"/></svg></button><button class="ib" aria-label="垂直居中"><svg class="s22"><use href="#al-m"/></svg></button><button class="ib pressed" aria-label="底端对齐"><svg class="s22"><use href="#al-b"/></svg></button><button class="ib" aria-label="自动换行"><svg class="s26" viewBox="0 0 26 26"><text x="3" y="12" font-size="16" fill="#3b3a39">ab</text><text x="3" y="24" font-size="16" fill="#3b3a39">c</text><path d="M23 12q2 8-10 8M17 16l-4 4 4 5" fill="none" stroke="#1e8bcd" stroke-width="2"/></svg></button></div>
          <div class="row gap3"><button class="ib" aria-label="左对齐"><svg class="s22"><use href="#al-l"/></svg></button><button class="ib" aria-label="居中"><svg class="s22"><use href="#al-c"/></svg></button><button class="ib" aria-label="右对齐"><svg class="s22"><use href="#al-r"/></svg></button><button class="ib" aria-label="合并后居中"><svg class="s24"><use href="#merge"/></svg></button><button class="dd slim" aria-label="合并选项"><svg class="chev"><use href="#chev"/></svg></button></div>
          <div class="row"><button class="ib" aria-label="减少缩进"><svg class="s22"><use href="#outdent"/></svg></button><button class="ib after" aria-label="增加缩进"><svg class="s22"><use href="#indent"/></svg></button><i class="sep"></i><button class="ib" aria-label="方向"><svg class="s26" viewBox="0 0 26 26"><text x="3" y="19" font-size="15" fill="#3b3a39" transform="rotate(-45 5 17)">ab</text><path d="M9 24L24 8M17 8h7v7" fill="none" stroke="#1e8bcd" stroke-width="1.800"/></svg></button><button class="dd slim" aria-label="方向选项"><svg class="chev"><use href="#chev"/></svg></button></div>
        </div>
        <div class="caption"><span>对齐方式</span><svg class="s12"><use href="#launch"/></svg></div>
      </div>
      <div class="group g-number">
        <div class="body rows">
          <div class="row"><select class="combo fmt" aria-label="数字格式"><option>常规</option></select></div>
          <div class="row"><button class="ib" aria-label="会计格式"><svg class="s24"><use href="#currency"/></svg></button><button class="dd" aria-label="会计选项"><svg class="chev"><use href="#chev"/></svg></button><button class="ib after" aria-label="百分比"><svg class="s24"><use href="#percent"/></svg></button><button class="ib after" aria-label="千位分隔"><svg class="s24"><use href="#comma"/></svg></button></div>
          <div class="row gap3"><button class="ib" aria-label="增加小数位"><svg class="s26" viewBox="0 0 26 26"><text x="16" y="11" font-size="14" fill="#3b3a39">0</text><text x="4" y="25" font-size="14" fill="#3b3a39">.00</text><path d="M13 7H1M6 2L1 7l5 5" fill="none" stroke="#1e8bcd" stroke-width="1.800"/></svg></button><button class="ib" aria-label="减少小数位"><svg class="s26" viewBox="0 0 26 26"><text x="4" y="11" font-size="14" fill="#3b3a39">.00</text><text x="12" y="25" font-size="14" fill="#3b3a39">.0</text><path d="M0 20h12M8 15l5 5-5 5" fill="none" stroke="#1e8bcd" stroke-width="1.800"/></svg></button></div>
        </div>
        <div class="caption"><span>数字</span><svg class="s12"><use href="#launch"/></svg></div>
      </div>
      <div class="group g-style">
        <div class="body">
          <div class="stack">
            <button class="tool"><svg class="s24"><use href="#cond"/></svg>条件格式<svg class="chev"><use href="#chev"/></svg></button>
            <button class="tool"><svg class="s24"><use href="#tablestyle"/></svg>套用表格格式<svg class="chev"><use href="#chev"/></svg></button>
            <button class="tool"><svg class="s24"><use href="#cellstyle"/></svg>单元格样式<svg class="chev"><use href="#chev"/></svg></button>
          </div>
        </div>
        <div class="caption"><span>样式</span></div>
      </div>
      <div class="group g-cells"><div class="body"><button class="tall"><svg class="s42"><use href="#cells"/></svg><span>单元格</span><svg class="chev"><use href="#chev"/></svg></button></div></div>
      <div class="group g-edit"><div class="body"><button class="tall"><svg class="s44"><use href="#find"/></svg><span>编辑</span><svg class="chev"><use href="#chev"/></svg></button></div></div>
      <div class="group g-add"><div class="body"><button class="tall"><svg class="s42"><use href="#addins"/></svg><span>加<br>载项</span></button></div><div class="caption"><span>加载项</span></div></div>
      <div class="group g-add"><div class="body"><button class="tall"><svg class="s48"><use href="#analyze"/></svg><span>分析<br>数据</span></button></div></div>
    </div>

    <div class="formula">
      <div class="namebox"><input value="A1" aria-label="名称框"><svg class="chev-md"><use href="#chev-lg"/></svg></div>
      <svg class="dots"><use href="#dots"/></svg>
      <div class="fx"><svg class="s20"><use href="#x"/></svg><svg class="tick"><use href="#tick"/></svg><i>fx</i></div>
      <input class="content" value="战区名称" aria-label="编辑栏">
    </div>

    <div class="sheet"><table data-cols="13" data-active="1"></table></div>

    <footer>
      <div class="sheettabs">
        <div class="arrows"><button aria-label="上一张"><svg><use href="#left"/></svg></button><button aria-label="下一张"><svg><use href="#right"/></svg></button></div>
        <button class="stab">8月成交数据</button>
        <button class="stab on">战区信息</button>
        <button class="stab last">城市信息</button>
        <button class="add" aria-label="新工作表"><svg class="s18" viewBox="0 0 12 12"><path d="M0 6h12M6 0v12" stroke="#262626"/></svg></button>
        <svg class="dots"><use href="#dots"/></svg>
        <div class="hscroll"><svg viewBox="0 0 10 14"><path d="M10 1v12q-1 1-2 0L0 7l8-6q1-1 2 0z" fill="#707070"/></svg><div class="thumb"></div></div>
      </div>
      <div class="status">
        <span>就绪</span><svg class="rec"><use href="#record"/></svg><svg class="acc"><use href="#access"/></svg><span>辅助功能: 一切就绪</span>
        <div class="views-switch">
          <button class="on" aria-label="普通视图"><svg class="s20"><use href="#v-normal"/></svg></button>
          <button aria-label="页面布局视图"><svg class="s22"><use href="#v-layout"/></svg></button>
          <button aria-label="分页预览视图"><svg class="s22"><use href="#v-break"/></svg></button>
        </div>
        <svg class="s12"><use href="#minus"/></svg><input type="range" min="0" max="100" value="50" aria-label="显示比例"><svg class="s12"><use href="#plus"/></svg>
      </div>
    </footer>
  </section>

  <svg class="notes" aria-hidden="true">
    <g fill="none" stroke="#ff2011" stroke-width="5">
      <rect x="594" y="9" width="86" height="42" rx="2"/>
      <rect x="1185" y="45" width="141" height="47" rx="2"/>
    </g>
    <g fill="#ff2011">
      <path d="M692 36L1167 76l2-5 10 12-13 11v-5L940 64z"/>
      <path d="M1224 99l-27 108-9-2 9 14 13-9-5-1 17-78z"/>
    </g>
  </svg>
  <span class="watermark">CSDN @毛毛虫</span>
</main>
</body>
</html>
```
FILE: sheet.js
```js
const data = [
  ["战区名称", "战区编号", "战区经理", "战区等级"],
  ["东部战区", "001", "江永", "一级战区"],
  ["西部战区", "003", "田楠", "二级战区"],
  ["南部战区", "002", "高安平", "二级战区"],
  ["北部战区", "004", "沈乐欣", "三级战区"],
];
const HEAD = 30;
const ROW = 28;

function fill(table) {
  const cols = Number(table.dataset.cols);
  const rows = Math.ceil((table.parentElement.clientHeight - HEAD) / ROW);
  const active = table.dataset.active === "1";
  let html = '<thead><tr><th class="corner"></th>';
  for (let c = 0; c < cols; c++) {
    html += `<th class="${active && c === 0 ? "sel" : ""}">${String.fromCharCode(65 + c)}</th>`;
  }
  html += "</tr></thead><tbody>";
  for (let r = 0; r < rows; r++) {
    // a row that shows only a sliver gets no number
    const shown = table.parentElement.clientHeight - HEAD - r * ROW > 8;
    html += `<tr><th class="${active && r === 0 ? "sel" : ""}">${shown ? r + 1 : ""}</th>`;
    for (let c = 0; c < cols; c++) {
      const text = (data[r] && data[r][c]) || "";
      const cls = active && r === 0 && c === 0 ? "active" : c === 1 && r > 0 && text ? "flag" : "";
      html += `<td class="${cls}">${text}</td>`;
    }
    html += "</tr>";
  }
  table.innerHTML = html + "</tbody>";
}

function fillAll() {
  document.querySelectorAll("table[data-cols]").forEach(fill);
}
fillAll();
window.addEventListener("resize", fillAll);
```
FILE: styles.css
```css
* { box-sizing: border-box; }
html, body { margin: 0; height: 100%; overflow: hidden; }
body {
  font: 18px/24px "Noto Sans", "Noto Sans CJK SC", sans-serif;
  color: #262626;
}
button, input, select { font: inherit; color: inherit; margin: 0; }
button { background: none; border: 0; padding: 0; white-space: nowrap; }
svg { flex: none; display: block; }
.defs { position: absolute; width: 0; height: 0; }

.s12 { width: 12px; height: 12px; }
.s16 { width: 16px; height: 16px; }
.s18 { width: 18px; height: 18px; }
.s20 { width: 20px; height: 20px; }
.s22 { width: 22px; height: 22px; }
.s24 { width: 24px; height: 24px; }
.s26 { width: 26px; height: 26px; }
.s42 { width: 42px; height: 42px; }
.s44 { width: 44px; height: 44px; }
.s46 { width: 46px; height: 46px; }
.s48 { width: 48px; height: 48px; }
.s42x46 { width: 42px; height: 46px; }
.chev { width: 10px; height: 7px; }
.chev-md { width: 16px; height: 10px; }
.chev-lg { width: 16px; height: 10px; }

.desktop { position: relative; height: 100%; overflow: hidden; }
.window { display: flex; flex-direction: column; }
.back { height: 100%; background: #f0f0f0; }
.front {
  position: absolute;
  left: 581px; right: -81px; top: 219px; bottom: 38px;
  background: #e4e4ea;
  border: 2px solid #107c41;
  border-radius: 12px;
  box-shadow: 0 12px 40px rgba(0, 0, 0, .4);
  overflow: hidden;
}

/* title bar */
.titlebar { display: flex; flex: none; align-items: center; height: 66px; padding: 6px 0 0 24px; }
.autosave { margin-left: 23px; }
.toggle {
  display: flex; align-items: center; gap: 12px;
  width: 66px; height: 30px; margin-left: 8px; padding-left: 3px;
  border: 1px solid #555; border-radius: 15px; background: #fff;
}
.toggle i { width: 22px; height: 22px; border-radius: 11px; background: #616161; }
.purple { color: #9c3fb0; --f: #d9a0e0; margin-left: 13px; }
.hist { display: flex; align-items: center; gap: 6px; margin-left: 20px; width: 38px; }
.redo { margin-left: 18px; }
.redo .s24 { transform: scaleX(-1); }
.pale { color: #b0b0b6; }
.qat { width: 12px; height: 10px; margin-left: 26px; }
.doc { display: flex; align-items: center; gap: 11px; margin-left: 38px; white-space: nowrap; }
.doc i { width: 6px; height: 6px; border-radius: 3px; background: #262626; }
.titlebar .chev-md { margin-left: 7px; }
.account { display: flex; align-items: center; margin-left: auto; padding-right: 98px; }
.account b {
  width: 36px; height: 36px; margin-left: 16px; border-radius: 18px;
  background: #a4262c; color: #fff; font-size: 15px; font-weight: 400; line-height: 36px; text-align: center;
}
.search { margin-right: 58px; }
.min { margin: 0 56px 0 46px; }

/* ribbon tabs */
.tabs { display: flex; height: 51px; flex: none; padding: 10px 18px 5px 27px; font-size: 20px; }
.front .tabs { padding-right: 16px; }
.tabs nav { display: flex; gap: 27px; margin-right: auto; }
.tabs nav button { position: relative; padding-top: 2px; }
.tabs nav button:first-child { margin-right: 6px; }
.tabs .on { font-weight: 700; }
.tabs .on::after { content: ""; position: absolute; left: 0; right: 0; bottom: 0; height: 3px; border-radius: 2px; background: #107c41; }
.comments, .share { display: flex; align-items: center; border-radius: 6px; }
.comments { width: 90px; padding-left: 12px; gap: 6px; background: #fff; border: 1px solid #8a8a8a; }
.share { width: 110px; margin-left: 12px; padding-left: 12px; gap: 6px; background: #107c41; color: #fff; }
.share .chev { margin-left: 10px; }

/* ribbon */
.ribbon {
  display: flex; flex: none; height: 151px; margin: 0 12px;
  background: #fff; border-radius: 12px;
  box-shadow: 0 2px 4px rgba(0, 0, 0, .2);
}
.group {
  flex: none; display: flex; flex-direction: column;
  background: linear-gradient(#d0d0d0, #d0d0d0) right 7px / 1px 135px no-repeat;
}
.body { display: flex; height: 123px; }
.rows { flex-direction: column; padding-top: 4px; }
.row { display: flex; align-items: center; height: 39px; }
.gap3 { gap: 3px; }
.gap4 { gap: 4px; }
.caption { display: flex; align-items: center; height: 22px; }
.caption span { flex: 1; text-align: center; }
.caption svg { margin: 6px 6px 0 0; }
.g-sheetview { width: 379px; padding-left: 18px; }
.g-sheetview .caption, .g-bookview .caption { padding-right: 14px; }
.g-bookview { width: 293px; padding-left: 12px; }
.g-show { width: 262px; padding-left: 12px; }
.g-show .caption { padding-right: 24px; }
.g-zoom { width: 233px; padding-left: 12px; }
.g-zoom .caption { padding-right: 14px; }
.g-window { width: 438px; padding-left: 18px; }
.g-window .caption { padding-right: 20px; }
.g-macro { width: 86px; padding-left: 12px; }
.g-macro .caption { padding-right: 12px; }
.g-clip { width: 155px; }
.g-clip .body { padding-left: 18px; }
.g-font { width: 272px; }
.g-font .body { padding-left: 12px; }
.g-align { width: 202px; }
.g-align .body { padding-left: 13px; }
.g-number { width: 160px; }
.g-number .body { padding-left: 12px; }
.g-font .caption span, .g-align .caption span, .g-number .caption span { padding-right: 6px; }
.g-style { width: 197px; }
.g-style .body { padding-left: 18px; }
.g-cells { width: 82px; }
.g-edit { width: 81px; }
.g-add { width: 86px; }
.g-cells .tall, .g-edit .tall, .g-add .tall { width: 100%; }

/* large buttons: an icon slot above one or two lines of text */
.tall {
  --slot: 52px; --top: 6px;
  display: grid; grid-template-rows: var(--slot) auto auto; align-content: start; justify-items: center;
  width: 62px; height: 115px; margin-top: 6px;
  border: 1px solid transparent; border-radius: 6px;
}
.tall > svg:first-child { margin-top: var(--top); }
.tall .chev { margin-top: 8px; }
.g-macro .tall, .g-clip .tall, .g-add .tall { --slot: 54px; }
.g-cells .tall { --slot: 49px; --top: 0px; }
.g-edit .tall { --slot: 49px; --top: 3px; }
.g-add .tall:has(.s48) { --top: 3px; }
.pressed { background: #ebebeb; border: 1px solid #616161; border-radius: 6px; }
.wide { width: 78px; }
.tool { display: flex; flex: none; align-items: center; gap: 6px; height: 39px; }
.tool .far { margin-left: 5px; }
.tool:disabled, .off { color: #b4b4b4; }
.tool:disabled svg { color: #9a9a9a; }
.stack { display: flex; flex-direction: column; padding-top: 4px; }
.two { padding: 15px 0 0 10px; gap: 9px; }
.g-bookview .tall + .tall { margin-left: 3px; }
.views { gap: 22px; padding-left: 6px; }
.g-sheetview .body { gap: 10px; padding-top: 18px; }
.g-clip .stack { padding-left: 9px; }
.checks { display: grid; grid-template-columns: 97px auto; align-content: start; padding: 4px 0 0 7px; }
.checks label { display: flex; align-items: center; gap: 8px; height: 39px; white-space: nowrap; }
.own-row { grid-column: 1; }
input[type="checkbox"] {
  appearance: none; width: 20px; height: 20px; border: 2px solid #7a7a7a; border-radius: 4px;
  background: #fff url("data:image/svg+xml,%3Csvg xmlns='http://www.w3.org/2000/svg' viewBox='0 0 16 16'%3E%3Cpath d='M3.500 8l3 3 6-6' fill='none' stroke='%23262626' stroke-width='1.500'/%3E%3C/svg%3E") center / 16px no-repeat;
}
input[type="checkbox"]:disabled {
  border-color: #c8c8c8;
  background: #f0f0f0 url("data:image/svg+xml,%3Csvg xmlns='http://www.w3.org/2000/svg' viewBox='0 0 16 16'%3E%3Cpath d='M3.500 8l3 3 6-6' fill='none' stroke='%23aaaaaa' stroke-width='1.500'/%3E%3C/svg%3E") center / 16px no-repeat;
}
.g-zoom .tall + .tall { margin-left: 3px; }
.g-zoom .tall + .wide { margin-left: 4px; }
.first { width: 141px; }
.second { width: 124px; }
.icons { width: 55px; padding-left: 16px; }
.second, .icons { background: linear-gradient(#d0d0d0, #d0d0d0) right 16px / 1px 94px no-repeat; }
.g-window .wide { margin-left: 10px; }
.collapse { align-self: flex-end; margin: 0 14px 16px auto; }

.combo {
  appearance: none; height: 36px; padding: 0 22px 0 2px; border: 1px solid #8a8a8a; border-radius: 6px;
  background: #fff url("data:image/svg+xml,%3Csvg xmlns='http://www.w3.org/2000/svg' viewBox='0 0 10 7'%3E%3Cpath d='M1 1l4 4 4-4' fill='none' stroke='%23262626' stroke-width='2'/%3E%3C/svg%3E") right 3px center / 10px 7px no-repeat;
}
.combo:disabled { opacity: 1; color: #b4b4b4; border-color: #dcdcdc; background-color: #f0f0f0; }
.view { width: 349px; background-image: url("data:image/svg+xml,%3Csvg xmlns='http://www.w3.org/2000/svg' viewBox='0 0 10 7'%3E%3Cpath d='M1 1l4 4 4-4' fill='none' stroke='%23b4b4b4' stroke-width='2'/%3E%3C/svg%3E"); }
.face { width: 188px; }
.size { width: 57px; }
.fmt { width: 136px; }
.ib { display: grid; place-items: center; width: 36px; height: 36px; font-size: 20px; }
.ib .s26 { overflow: visible; }
.ib em { font-family: "Liberation Serif", serif; font-size: 22px; }
.w38 { width: 38px; }
.w40 { width: 40px; }
.after { margin-left: 3px; }
.dd { display: grid; place-items: center; width: 22px; height: 36px; }
.slim { width: 16px; }
.sep { width: 1px; height: 36px; margin: 0 3px; background: #d0d0d0; }
.g-font .dd + .ib { margin-left: 3px; }

/* formula bar */
.formula { display: flex; flex: none; padding: 12px 12px 9px; }
.formula input { border: 0; background: none; outline: 0; min-width: 0; }
.namebox, .fx, .formula .content { height: 36px; border: 1px solid #d0d0d0; border-radius: 6px; background: #fff; }
.namebox { display: flex; align-items: center; width: 152px; padding: 0 6px; font-size: 20px; }
.namebox input { flex: 1; padding: 0; }
.dots { width: 4px; height: 16px; margin: 10px 13px; }
.fx { display: flex; align-items: center; gap: 13px; width: 110px; padding-left: 8px; }
.fx .tick { width: 24px; height: 20px; }
.fx i { font: italic 28px/30px "Liberation Serif", serif; color: #262626; }
.formula .content { flex: 1; margin-left: 6px; padding: 0 16px 4px; border: 1px solid #d0d0d0; background: #fff; font-size: 22px; }

/* worksheet */
.sheet { flex: 1; min-height: 0; overflow: hidden; background: #fff; }
.sheet table { table-layout: fixed; width: 0; border-spacing: 0; font: 300 22px/27px "Noto Sans CJK SC", sans-serif; color: #000; }
.sheet th { width: 104px; height: 30px; padding: 4px 0 0; font-size: 21px; line-height: 24px; font-weight: 300; color: #444; background: #efefef; border: 0 solid #dcdcdc; border-width: 0 1px 1px 0; }
.sheet thead th { border-bottom-color: #a6a6a6; }
.sheet tbody th { width: 43px; height: 28px; padding-top: 3px; border-right-color: #a6a6a6; }
.sheet .corner { width: 43px; background: linear-gradient(135deg, transparent 50%, #dcdcdc 50%) 19px 7px / 20px 19px no-repeat #efefef; }
.sheet th.sel { background: #dfdfdf; color: #217346; }
.sheet td { position: relative; height: 28px; padding: 0 3px; border: 0 solid #dcdcdc; border-width: 0 1px 1px 0; white-space: nowrap; }
.flag::before { content: ""; position: absolute; left: 0; top: 0; border: 5px solid transparent; border-left-color: #0a860a; border-top-color: #0a860a; }
.active::before { content: ""; position: absolute; inset: -2px; border: 2px solid #217346; z-index: 1; }
.active::after { content: ""; position: absolute; right: -3px; bottom: -3px; width: 6px; height: 6px; background: #217346; outline: 1px solid #fff; z-index: 2; }

/* sheet tabs and status bar */
footer { flex: none; }
.sheettabs { display: flex; height: 49px; border-top: 1px solid #d8d8d8; border-bottom: 1px solid #fff; font-size: 21px; }
.arrows { display: flex; width: 163px; padding: 0 0 2px 35px; gap: 39px; align-items: center; color: #8a8a8a; }
.arrows svg { width: 10px; height: 16px; }
.stab { height: 29px; margin-top: 9px; padding: 0 16px 2px; border-right: 1px solid #c8c8c8; width: 152px; font-size: 21px; line-height: 27px; }
.stab.on { position: relative; width: 109px; height: 43px; margin: -1px 5px 0 6px; padding: 0 0 2px; border: 1px solid #dcdcdc; border-top: 0; border-radius: 0 0 8px 8px; background: #fff; line-height: 39px; }
.stab.on::after { content: ""; position: absolute; left: 12px; right: 12px; bottom: 4px; height: 3px; background: #107c41; }
.stab.last { width: 122px; border-left: 1px solid #c8c8c8; }
.add { width: 18px; margin-left: 62px; padding-bottom: 2px; }
.sheettabs .dots { margin: 15px 22px 0 auto; }
.hscroll { display: flex; align-items: center; gap: 8px; width: 536px; height: 26px; margin-top: 9px; padding: 0 91px 0 8px; border-radius: 13px; background: #f5f5f5; }
.hscroll svg { width: 10px; height: 14px; }
.thumb { flex: 1; height: 12px; border-radius: 6px; background: #707070; }
.status { display: flex; align-items: center; height: 32px; padding: 0 12px 0 10px; background: #f5f5f5; }
.front .status { padding-right: 93px; }
.rec { width: 22px; height: 20px; margin: 0 25px 0 28px; }
.acc { width: 24px; height: 22px; margin-right: 2px; }
.views-switch { display: flex; align-self: stretch; margin-left: auto; margin-right: 8px; }
.views-switch button { display: grid; place-items: center; width: 60px; }
.views-switch .on { background: rgba(0, 0, 0, .1); }
input[type="range"] { appearance: none; width: 148px; height: 18px; margin: 0 8px; background: linear-gradient(#616161, #616161) center / 100% 2px no-repeat; }
input[type="range"]::-webkit-slider-thumb { appearance: none; width: 8px; height: 17px; background: #616161; }
.pct { margin-left: 20px; }
.edge { height: 3px; background: #aeb2c0; border-bottom: 1px solid #dfe3f0; }

/* annotations over the windows */
.notes { position: absolute; left: 0; top: 0; width: 100%; height: 100%; pointer-events: none; }
.watermark { position: absolute; right: 14px; bottom: 6px; font-size: 15px; color: rgba(255, 255, 255, .8); text-shadow: 1px 1px 1px #666; }
```
